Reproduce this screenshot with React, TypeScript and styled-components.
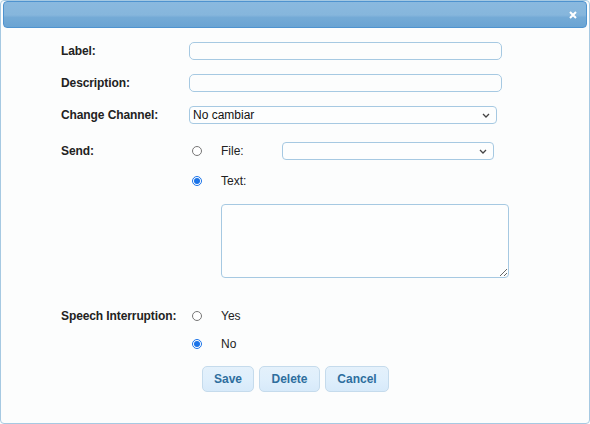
import React from 'react';
import styled, {createGlobalStyle} from "styled-components";

const GlobalStyle = createGlobalStyle`
  html, body {
    margin: 0;
    padding: 0;
    background: #fcfdfd;
  }
  body {
    font-family: "Liberation Sans", Arial, sans-serif;
    font-size: 12px;
    color: #222222;
  }
`;

const Dialog = styled.div`
  box-sizing: border-box;
  width: 590px;
  height: 424px;
  border: 1px solid #a6c9e2;
  border-radius: 4px;
  padding: 0 2px 2px 2px;
  background: #fcfdfd;
  overflow: hidden;
`;

const TitleBar = styled.div`
  box-sizing: border-box;
  height: 27px;
  border: 1px solid #4f93cf;
  border-radius: 4px;
  display: flex;
  align-items: center;
  justify-content: flex-end;
  padding-right: 7px;
  background: linear-gradient(to bottom, #8ab9df 0%, #86b6dc 52%, #74aad6 62%, #6aa4d3 100%);
`;

const CloseButton = styled.button`
  border: 0;
  background: none;
  padding: 0;
  width: 12px;
  height: 12px;
  display: flex;
  align-items: center;
  justify-content: center;
  cursor: pointer;
`;

const Form = styled.form`
  padding-left: 58px;
  display: flex;
  flex-direction: column;
`;

const Row = styled.div<{ $top: number; $height?: number }>`
  display: flex;
  align-items: center;
  margin-top: ${p => p.$top}px;
  height: ${p => p.$height ?? 18}px;
`;

const Label = styled.label`
  width: 128px;
  flex: none;
  font-weight: bold;
  letter-spacing: -0.1px;
`;

const Spacer = styled.div`
  width: 128px;
  flex: none;
`;

const RadioCell = styled.div`
  width: 32px;
  flex: none;
  display: flex;
  align-items: center;
  padding-left: 3px;
  box-sizing: border-box;
`;

const Radio = styled.input.attrs({type: "radio"})`
  margin: 0;
  width: 10px;
  height: 10px;
  accent-color: #1a73e8;
`;

const OptionText = styled.span<{ $width?: number }>`
  width: ${p => (p.$width ? `${p.$width}px` : "auto")};
  flex: none;
`;

const TextInput = styled.input.attrs({type: "text"})<{ $width: number }>`
  box-sizing: border-box;
  width: ${p => p.$width}px;
  height: 18px;
  margin: 0;
  border: 1px solid #a6c9e2;
  border-radius: 5px;
  background: #fcfdfd;
  font: 12px "Liberation Sans", Arial, sans-serif;
  padding: 0 3px;
`;

const Select = styled.select<{ $width: number }>`
  box-sizing: border-box;
  appearance: none;
  width: ${p => p.$width}px;
  height: 18px;
  margin: 0;
  border: 1px solid #a6c9e2;
  border-radius: 4px;
  background: #fdfefe url("data:image/svg+xml;utf8,<svg xmlns='http://www.w3.org/2000/svg' width='8' height='5' viewBox='0 0 8 5'><path d='M1 1l3 3 3-3' fill='none' stroke='%23444' stroke-width='1.3'/></svg>") no-repeat right 6px center;
  font: 12px "Liberation Sans", Arial, sans-serif;
  color: #111;
  padding: 0 18px 0 3px;
`;

const TextArea = styled.textarea`
  box-sizing: border-box;
  width: 288px;
  height: 74px;
  margin: 0 0 0 32px;
  border: 1px solid #a6c9e2;
  border-radius: 4px;
  background: #fdfefe;
  font: 12px "Liberation Sans", Arial, sans-serif;
`;

const ButtonRow = styled.div`
  display: flex;
  gap: 5px;
  margin-top: 13px;
  padding-left: 141px;
`;

const Button = styled.button<{ $width: number }>`
  box-sizing: border-box;
  width: ${p => p.$width}px;
  height: 26px;
  border: 1px solid #c5dbec;
  border-radius: 5px;
  background: linear-gradient(to bottom, #e4f1fb 0%, #dfeffc 50%, #d7eafa 100%);
  color: #2e6e9e;
  font: bold 12px "Liberation Sans", Arial, sans-serif;
  padding: 0;
  cursor: pointer;
`;

function App() {
    return (
        <>
            <GlobalStyle/>
            <Dialog>
                <TitleBar>
                    <CloseButton aria-label="close">
                        <svg width="8" height="8" viewBox="0 0 8 8">
                            <path d="M1 1l6 6M7 1L1 7" stroke="#ffffff" strokeWidth="2"/>
                        </svg>
                    </CloseButton>
                </TitleBar>
                <Form onSubmit={e => e.preventDefault()}>
                    <Row $top={14}>
                        <Label>Label:</Label>
                        <TextInput $width={313}/>
                    </Row>
                    <Row $top={14}>
                        <Label>Description:</Label>
                        <TextInput $width={313}/>
                    </Row>
                    <Row $top={14}>
                        <Label>Change Channel:</Label>
                        <Select $width={308} defaultValue="none">
                            <option value="none">No cambiar</option>
                        </Select>
                    </Row>
                    <Row $top={18}>
                        <Label>Send:</Label>
                        <RadioCell><Radio name="send"/></RadioCell>
                        <OptionText $width={61}>File:</OptionText>
                        <Select $width={212} defaultValue="">
                            <option value=""></option>
                        </Select>
                    </Row>
                    <Row $top={12}>
                        <Spacer/>
                        <RadioCell><Radio name="send" defaultChecked/></RadioCell>
                        <OptionText>Text:</OptionText>
                    </Row>
                    <Row $top={14} $height={74}>
                        <Spacer/>
                        <TextArea/>
                    </Row>
                    <Row $top={29}>
                        <Label>Speech Interruption:</Label>
                        <RadioCell><Radio name="interrupt"/></RadioCell>
                        <OptionText>Yes</OptionText>
                    </Row>
                    <Row $top={10}>
                        <Spacer/>
                        <RadioCell><Radio name="interrupt" defaultChecked/></RadioCell>
                        <OptionText>No</OptionText>
                    </Row>
                    <ButtonRow>
                        <Button $width={52} type="button">Save</Button>
                        <Button $width={61} type="button">Delete</Button>
                        <Button $width={64} type="button">Cancel</Button>
                    </ButtonRow>
                </Form>
            </Dialog>
        </>
    );
}

export default App;
